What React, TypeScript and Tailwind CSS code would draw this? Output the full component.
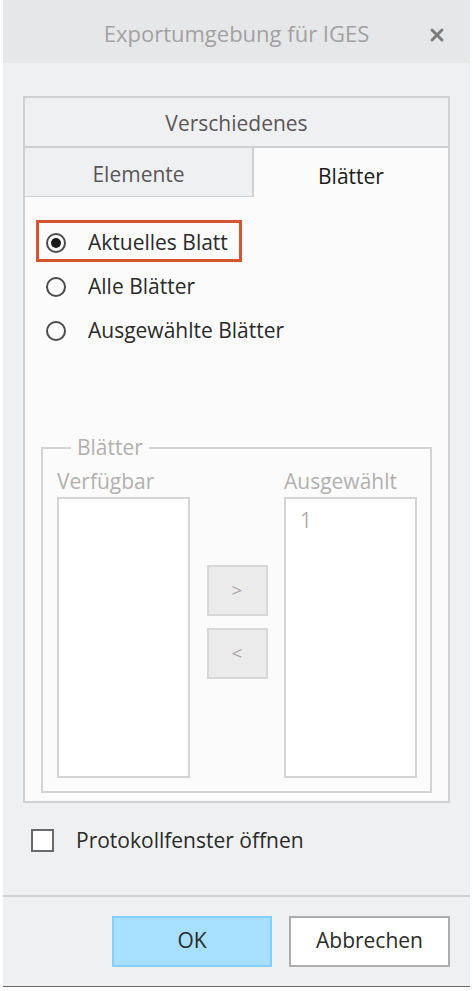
import { X } from 'lucide-react';

function Radio({ checked, label }: { checked?: boolean; label: string }) {
  return (
    <div className="flex items-center h-[44px]">
      <div className="w-[40px] flex justify-center">
        <div className="w-[20px] h-[20px] rounded-full border-[2px] border-[#4a4a4a] bg-white flex items-center justify-center">
          {checked && <div className="w-[10px] h-[10px] rounded-full bg-[#1a1a1a]" />}
        </div>
      </div>
      <span className="ml-[12px] text-[21px] text-[#2a2a2a]">{label}</span>
    </div>
  );
}

export default function App() {
  return (
    <div className="w-[473px] h-[991px] bg-white overflow-hidden" style={{ fontFamily: '"Open Sans", "Noto Sans", sans-serif' }}>
      <div className="flex flex-col h-[987px] w-[467px] ml-[3px] bg-[#eff0f2] border-b border-[#6b6b6b]">
        {/* title bar */}
        <div className="h-[63px] bg-[#e6e7e8] flex items-center relative">
          <div className="flex-1 text-center text-[22px] text-[#a3a1a3] pt-[4px]">Exportumgebung für IGES</div>
          <X className="absolute right-[23px] top-[25px] text-[#7b7b7b]" size={20} strokeWidth={3.5} />
        </div>

        {/* tabs */}
        <div className="mt-[33px] mx-[20px] flex flex-col">
          <div className="h-[52px] pt-[3px] border-[2px] border-[#cfd0d2] bg-[#eff0f2] flex items-center justify-center text-[21px] text-[#5a5658]">
            Verschiedenes
          </div>
          <div className="flex h-[52px] -mt-[2px]">
            <div className="w-[231px] pt-[6px] border-[2px] border-[#cfd0d2] bg-[#eff0f2] flex items-center justify-center text-[21px] text-[#5a5658]">
              Elemente
            </div>
            <div className="flex-1 pt-[8px] -ml-[2px] border-[2px] border-b-0 border-[#cfd0d2] bg-[#fbfbfb] flex items-center justify-center text-[21px] text-[#1c1c1c]">
              Blätter
            </div>
          </div>
          <div className="h-[606px] -mt-[1px] border-[2px] border-t-0 border-[#cfd0d2] bg-[#fbfbfb] flex flex-col">
            <div className="pl-[11px] pt-[24px] flex flex-col">
              <div className="relative w-[206px]">
                <div className="absolute left-0 right-0 -top-[1px] bottom-[3px] border-[3px] border-[#d6542e]" />
                <Radio checked label="Aktuelles Blatt" />
              </div>
              <Radio label="Alle Blätter" />
              <Radio label="Ausgewählte Blätter" />
            </div>

            {/* group box */}
            <div className="relative mt-[94px] mx-[16px] h-[346px] border-[2px] border-[#d3d4d6]">
              <span className="absolute -top-[16px] left-[28px] px-[6px] bg-[#fbfbfb] text-[21px] leading-[28px] text-[#b3afaf]">Blätter</span>
              <div className="flex pt-[20px] pl-[14px]">
                <div className="flex flex-col gap-[4px]">
                  <span className="text-[21px] leading-[24px] text-[#b3afaf]">Verfügbar</span>
                  <div className="w-[133px] h-[281px] border-[2px] border-[#d3d4d6] bg-white" />
                </div>
                <div className="w-[94px] flex flex-col items-center pt-[96px] gap-[12px]">
                  <div className="w-[61px] h-[51px] border-[2px] border-[#d6d7d9] bg-[#ebebeb] flex items-center justify-center text-[19px] text-[#a8a4a6]">&gt;</div>
                  <div className="w-[61px] h-[51px] border-[2px] border-[#d6d7d9] bg-[#ebebeb] flex items-center justify-center text-[19px] text-[#a8a4a6]">&lt;</div>
                </div>
                <div className="flex flex-col gap-[4px]">
                  <span className="text-[21px] leading-[24px] text-[#b3afaf]">Ausgewählt</span>
                  <div className="w-[133px] h-[281px] border-[2px] border-[#d3d4d6] bg-white pl-[14px] pt-[6px] text-[21px] text-[#b3afaf]">1</div>
                </div>
              </div>
            </div>
          </div>
        </div>

        {/* checkbox */}
        <div className="flex items-center mt-[22px] ml-[28px]">
          <div className="w-[23px] h-[23px] border-[2px] border-[#6a6a6a] bg-white" />
          <span className="ml-[22px] text-[21px] text-[#2a2a2a]">Protokollfenster öffnen</span>
        </div>

        <div className="mt-[38px] h-[2px] bg-[#cfd0d2]" />

        {/* buttons */}
        <div className="flex justify-end gap-[17px] mt-[19px] mr-[20px]">
          <button className="w-[160px] h-[51px] border-[2px] border-[#86d0f6] bg-[#a6e0fe] text-[21px] text-[#2a2a2a]">OK</button>
          <button className="w-[161px] h-[51px] border-[2px] border-[#adadad] bg-white text-[21px] text-[#2a2a2a]">Abbrechen</button>
        </div>
      </div>
    </div>
  );
}
